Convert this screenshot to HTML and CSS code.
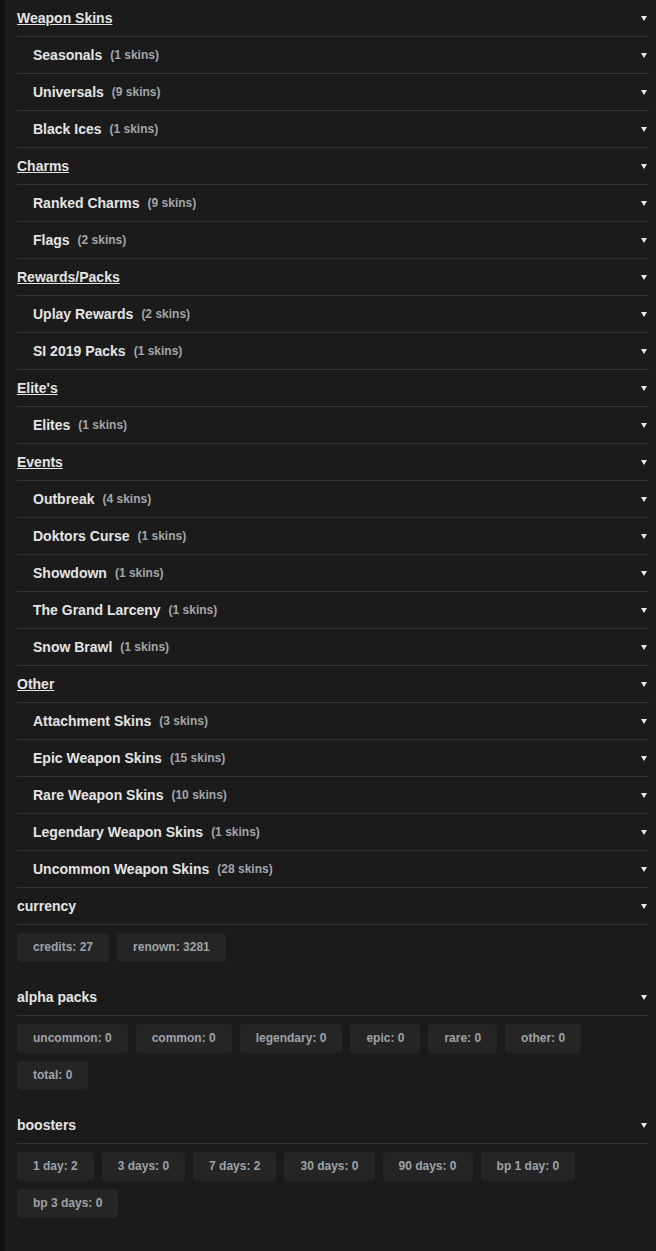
FILE: index.html
```html
<!DOCTYPE html>
<html lang="en">

<head>
    <meta charset="UTF-8">
    <meta name="viewport" content="width=device-width, initial-scale=1.0">
    <title>Inventory</title>
    <link rel="stylesheet" href="styles.css">
</head>

<body>
    <div class="panel">
        <!-- skin groups -->
        <div class="row group"><span class="group-name">Weapon Skins</span><span class="caret"></span></div>
        <div class="row sub"><span class="name">Seasonals</span><span class="count">(1 skins)</span><span class="caret"></span></div>
        <div class="row sub"><span class="name">Universals</span><span class="count">(9 skins)</span><span class="caret"></span></div>
        <div class="row sub"><span class="name">Black Ices</span><span class="count">(1 skins)</span><span class="caret"></span></div>

        <div class="row group"><span class="group-name">Charms</span><span class="caret"></span></div>
        <div class="row sub"><span class="name">Ranked Charms</span><span class="count">(9 skins)</span><span class="caret"></span></div>
        <div class="row sub"><span class="name">Flags</span><span class="count">(2 skins)</span><span class="caret"></span></div>

        <div class="row group"><span class="group-name">Rewards/Packs</span><span class="caret"></span></div>
        <div class="row sub"><span class="name">Uplay Rewards</span><span class="count">(2 skins)</span><span class="caret"></span></div>
        <div class="row sub"><span class="name">SI 2019 Packs</span><span class="count">(1 skins)</span><span class="caret"></span></div>

        <div class="row group"><span class="group-name">Elite's</span><span class="caret"></span></div>
        <div class="row sub"><span class="name">Elites</span><span class="count">(1 skins)</span><span class="caret"></span></div>

        <div class="row group"><span class="group-name">Events</span><span class="caret"></span></div>
        <div class="row sub"><span class="name">Outbreak</span><span class="count">(4 skins)</span><span class="caret"></span></div>
        <div class="row sub"><span class="name">Doktors Curse</span><span class="count">(1 skins)</span><span class="caret"></span></div>
        <div class="row sub"><span class="name">Showdown</span><span class="count">(1 skins)</span><span class="caret"></span></div>
        <div class="row sub"><span class="name">The Grand Larceny</span><span class="count">(1 skins)</span><span class="caret"></span></div>
        <div class="row sub"><span class="name">Snow Brawl</span><span class="count">(1 skins)</span><span class="caret"></span></div>

        <div class="row group"><span class="group-name">Other</span><span class="caret"></span></div>
        <div class="row sub"><span class="name">Attachment Skins</span><span class="count">(3 skins)</span><span class="caret"></span></div>
        <div class="row sub"><span class="name">Epic Weapon Skins</span><span class="count">(15 skins)</span><span class="caret"></span></div>
        <div class="row sub"><span class="name">Rare Weapon Skins</span><span class="count">(10 skins)</span><span class="caret"></span></div>
        <div class="row sub"><span class="name">Legendary Weapon Skins</span><span class="count">(1 skins)</span><span class="caret"></span></div>
        <div class="row sub"><span class="name">Uncommon Weapon Skins</span><span class="count">(28 skins)</span><span class="caret"></span></div>

        <!-- stats -->
        <div class="row section"><span class="name">currency</span><span class="caret"></span></div>
        <div class="chips">
            <span class="chip">credits: 27</span>
            <span class="chip">renown: 3281</span>
        </div>

        <div class="row section"><span class="name">alpha packs</span><span class="caret"></span></div>
        <div class="chips">
            <span class="chip">uncommon: 0</span>
            <span class="chip">common: 0</span>
            <span class="chip">legendary: 0</span>
            <span class="chip">epic: 0</span>
            <span class="chip">rare: 0</span>
            <span class="chip">other: 0</span>
            <span class="chip">total: 0</span>
        </div>

        <div class="row section"><span class="name">boosters</span><span class="caret"></span></div>
        <div class="chips">
            <span class="chip">1 day: 2</span>
            <span class="chip">3 days: 0</span>
            <span class="chip">7 days: 2</span>
            <span class="chip">30 days: 0</span>
            <span class="chip">90 days: 0</span>
            <span class="chip">bp 1 day: 0</span>
            <span class="chip">bp 3 days: 0</span>
        </div>
    </div>
</body>

</html>
```

FILE: styles.css
```css
html,
body {
    margin: 0;
    padding: 0;
    background-color: #111;
    font-family: "Liberation Sans", Arial, sans-serif;
}

.panel {
    margin-left: 5px;
    padding: 0 7px 32px 12px;
    min-height: 1251px;
    box-sizing: border-box;
    background-color: #1b1b1b;
}

.row {
    display: flex;
    align-items: center;
    height: 36px;
    border-bottom: 1px solid #333;
    font-size: 14px;
    font-weight: bold;
    color: #e4e4e4;
}

.group-name {
    text-decoration: underline;
}

.sub {
    padding-left: 16px;
}

.count {
    margin-left: 8px;
    font-size: 12px;
    color: #a3a6aa;
}

.caret {
    margin-left: auto;
    margin-right: 2px;
    width: 0;
    height: 0;
    border-left: 3.5px solid transparent;
    border-right: 3.5px solid transparent;
    border-top: 5px solid #e8e8e8;
}

.chips {
    display: flex;
    flex-wrap: wrap;
    gap: 8px;
    margin: 8px 0 17px;
}

.chip {
    height: 29px;
    line-height: 29px;
    padding: 0 16px;
    border-radius: 4px;
    background-color: #252525;
    font-size: 12px;
    font-weight: bold;
    color: #9ea3a8;
}
```
